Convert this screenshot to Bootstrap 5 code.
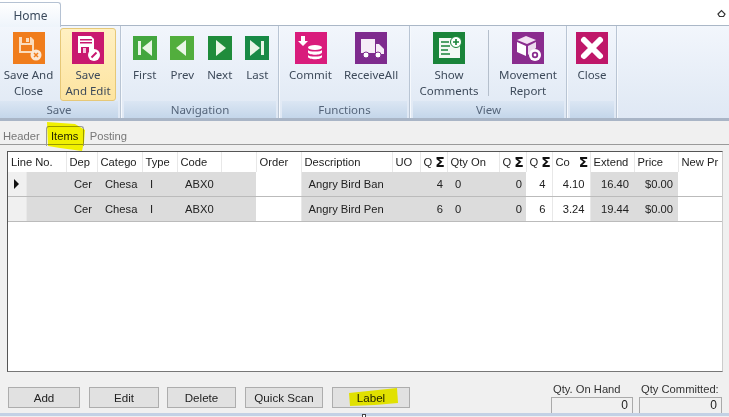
<!DOCTYPE html>
<html lang="en">
<head>
<meta charset="utf-8">
<title>Items</title>
<link href="https://cdn.jsdelivr.net/npm/bootstrap@5.3.0/dist/css/bootstrap.min.css" rel="stylesheet">
<style>
html,body{height:417px;overflow:hidden}
body{background:#f0f0f0;font-family:"Liberation Sans",Arial,sans-serif;font-size:11.2px;color:#333;position:relative}
.tabstrip{height:26px;background:#fff}
.hometab{width:61px;height:25px;margin-top:2px;border:1px solid #b5c2d3;border-bottom:0;border-left:0;border-radius:0 3px 0 0;background:linear-gradient(#fff,#eef4fb);font-family:"Noto Sans",sans-serif;font-size:12px;color:#3b4a5c;line-height:26px;text-align:center;position:relative;z-index:1;padding-left:1px}
.collapser{width:9px;height:9px;margin:9px 3px 0 0}
.ribbon{height:96px;margin-top:-1px;background:linear-gradient(#f2f6fc,#dfe8f4);border-top:1px solid #aab7c7;border-bottom:3px solid #a9b5c6}
.rgroup{border-right:1px solid #b9c5d4;box-shadow:1px 0 0 #f6f9fd;height:100%;padding:2px 2px 1px 3px}
.g-save{width:121px;padding-left:0}.g-nav{width:158px}.g-fn{width:131px}.g-view{width:157px}.g-close{width:50px}
.rbtns{height:73px}
.rlabel{height:17px;line-height:17px;text-align:center;font-family:"Noto Sans",sans-serif;font-size:11.5px;color:#55657a;background:linear-gradient(#dbe6f3,#c4d6ea)}
.rbtn{font-family:"Noto Sans",sans-serif;font-size:11.5px;line-height:16px;color:#3d4a5a;text-align:center;padding-top:3px;border:1px solid transparent;border-radius:3px}
.rbtn svg{display:block;margin:0 auto 3px}
.rbtn.active-btn{background:linear-gradient(#fff0c2,#fde4a0);border-color:#e6c878}
.navbtn{width:38px;padding-top:7px}
.navbtn svg{margin-bottom:7px}
.gapnav{padding:0 0 0 2px}
.w57{width:57px}.w56{width:56px}.w64{width:64px}.wfn{width:57px}
.gap3{margin-left:3px}
.rsep{width:1px;height:66px;background:#b5bfcc;margin:2px 7px 0 7px}
.pagetabs{height:24px;border-bottom:1px solid #9a9a9a;padding-left:3px;color:#777;position:relative}
.pagetabs span{line-height:30px}
.ptab-on{margin:5px 0 -1px 6px;width:38px;height:20px;border:1px solid #9a9a9a;border-bottom:0;border-radius:3px 3px 0 0;text-align:center;color:#222;line-height:19px!important}
.ptab-off{margin-left:6px}
.gridwrap{padding:6px 6px 0 7px;height:227px}
.gridbox{height:221px;background:#fff;border:1px solid #555;border-right-color:#ccc;border-bottom-color:#777;overflow:hidden}
.table.dg{table-layout:fixed;width:714px;margin:0;border-collapse:collapse;font-size:11.2px;color:#222}
.table.dg>:not(caption)>*>*{padding:0 3px;border:0;border-right:1px solid #e8e8e8;border-bottom:1px solid #bbb;white-space:nowrap;overflow:hidden;background:transparent;color:#222;box-shadow:none;vertical-align:middle;line-height:14px}
.table.dg>thead>tr>th{font-weight:400;height:20px;border-bottom:0;background:#fff;padding:0 0 0 3px}
.table.dg>tbody>tr>td{height:24.5px}
.table.dg>tbody>tr>td.gry{background:#dcdcdc;border-right:0}
.table.dg>tbody>tr>td.wht{background:#fff}
.table.dg>tbody>tr>td.rh{background:#f0f0f0;padding:0}
.table.dg>tbody>tr>td.e4{padding-right:4px}
.table.dg>tbody>tr>td.e5{padding-right:5px}
.table.dg>tbody>tr>td.e6{padding-right:6px}
.table.dg>tbody>tr>td.i5{padding-left:8px}
.table.dg>tbody>tr>td.i6{padding-left:7px}
.sig{font-family:"DejaVu Sans",sans-serif;font-weight:700;font-size:14px;color:#111;line-height:12px;vertical-align:-1px}
.sigfar{margin-left:9px}
.tarrow{width:0;height:0;display:block;margin-left:6px;border-left:5px solid #111;border-top:5px solid transparent;border-bottom:5px solid transparent}
.foot{height:41px;padding:15px 7px 0 8px}
.wbtn{height:21px;padding:0;font-size:11.6px;line-height:19px;color:#222;background:#e1e1e1;border:1px solid #adadad;border-radius:0}
.qtybox{width:82px;line-height:14px;margin-top:-5px;white-space:nowrap}
.qtybox+.qtybox{margin-left:6px;width:83px}
.qlab{padding-left:2px;height:15px;color:#333;font-size:11.2px}
.qval{height:16px;border:1px solid #aaa;border-bottom:0;background:#f0f0f0;text-align:right;padding-right:4px;color:#222;font-size:12px}
.statusbar{height:3px;background:#c3d1e5}
.hl{position:absolute;mix-blend-mode:multiply;pointer-events:none}
.sizer{position:absolute;left:362px;top:414px;width:4px;height:3px;background:#fff;border:1px solid #444;border-bottom:0}
</style>
</head>
<body>
<div class="tabstrip d-flex justify-content-between">
  <div class="hometab">Home</div>
  <svg class="collapser" viewBox="0 0 9 9"><path d="M1 5 4.500 1.500 8 5 6.500 7.500H2.500Z" fill="none" stroke="#333" stroke-width="1.200"/></svg>
</div>
<div class="ribbon d-flex">
  <div class="rgroup g-save">
    <div class="rbtns d-flex">
      <div class="rbtn w57"><svg width="32" height="32" viewBox="0 0 32 32"><rect width="32" height="32" fill="#f07d1c"/><path d="M6 5H18L21 8V21H6Z" fill="#fbdcbc"/><rect x="9" y="5" width="8" height="6" fill="#f07d1c"/><rect x="13" y="6" width="3" height="4" fill="#fbdcbc"/><rect x="8" y="13" width="11" height="6" fill="#f07d1c"/><circle cx="23" cy="23" r="5.500" fill="#fbe6d2"/><path d="M21 21l4 4m0-4-4 4" stroke="#f07d1c" stroke-width="1.500"/></svg>Save And<br>Close</div>
      <div class="rbtn w56 active-btn gap3"><svg width="32" height="32" viewBox="0 0 32 32"><rect width="32" height="32" fill="#c9186f"/><path d="M6 4H19L22 7V21H6Z" fill="#fff"/><rect x="8" y="7" width="12" height="1.500" fill="#c9186f"/><rect x="8" y="10" width="12" height="1.500" fill="#c9186f"/><rect x="9" y="15" width="8" height="6" fill="#c9186f"/><rect x="11" y="16" width="3" height="5" fill="#f4c4dc"/><circle cx="22" cy="23" r="6" fill="#fff"/><path d="M19.500 25.500l5-5" stroke="#c9186f" stroke-width="2"/></svg>Save<br>And Edit</div>
    </div>
    <div class="rlabel">Save</div>
  </div>
  <div class="rgroup g-nav">
    <div class="rbtns d-flex gapnav">
      <div class="rbtn navbtn"><svg width="24" height="24" viewBox="0 0 24 24"><rect width="24" height="24" fill="#43a63f"/><rect x="5" y="5" width="3" height="14" fill="#e8f5e6"/><path d="M19 4V20L9 12Z" fill="#e8f5e6"/></svg>First</div>
      <div class="rbtn navbtn"><svg width="24" height="24" viewBox="0 0 24 24"><rect width="24" height="24" fill="#52ae3d"/><path d="M16 4V20L6 12Z" fill="#eaf6e6"/></svg>Prev</div>
      <div class="rbtn navbtn"><svg width="24" height="24" viewBox="0 0 24 24"><rect width="24" height="24" fill="#1f8c3b"/><path d="M8 4V20L18 12Z" fill="#eaf6e6"/></svg>Next</div>
      <div class="rbtn navbtn"><svg width="24" height="24" viewBox="0 0 24 24"><rect width="24" height="24" fill="#188a46"/><rect x="16" y="5" width="3" height="14" fill="#e8f5e6"/><path d="M5 4V20L15 12Z" fill="#e8f5e6"/></svg>Last</div>
    </div>
    <div class="rlabel">Navigation</div>
  </div>
  <div class="rgroup g-fn">
    <div class="rbtns d-flex">
      <div class="rbtn wfn"><svg width="32" height="32" viewBox="0 0 32 32"><rect width="32" height="32" fill="#d91c7c"/><path d="M6 4h4v5h3l-5 5-5-5h3Z" fill="#fff"/><g fill="#fff"><ellipse cx="20" cy="15.500" rx="7" ry="2.500"/><path d="M13 18c1 2 13 2 14 0v2.500c-1 3-13 3-14 0Z"/><path d="M13 23c1 2 13 2 14 0v2c-1 3-13 3-14 0Z"/></g></svg>Commit</div>
      <div class="rbtn w64"><svg width="32" height="32" viewBox="0 0 32 32"><rect width="32" height="32" fill="#7e2b8e"/><rect x="6" y="7" width="14" height="14" fill="#f6ecf7"/><path d="M21 12h3l5 5v5H21Z" fill="#f6ecf7"/><circle cx="11" cy="23" r="3" fill="#fff" stroke="#7e2b8e"/><circle cx="23" cy="23" r="3" fill="#fff" stroke="#7e2b8e"/></svg>ReceiveAll</div>
    </div>
    <div class="rlabel">Functions</div>
  </div>
  <div class="rgroup g-view">
    <div class="rbtns d-flex ps-1">
      <div class="rbtn w64"><svg width="32" height="32" viewBox="0 0 32 32"><rect width="32" height="32" fill="#1a843a"/><path d="M6 6H19V11H27V26H6Z" fill="#f4f9f5"/><path d="M8 10h8M8 14h9M8 18h7M8 22h9" stroke="#1a843a" stroke-width="1.600"/><circle cx="23" cy="10" r="5.500" fill="#fff" stroke="#1a843a"/><path d="M23 7v6M20 10h6" stroke="#1a843a" stroke-width="1.600"/></svg>Show<br>Comments</div>
      <div class="rsep"></div>
      <div class="rbtn w64"><svg width="32" height="32" viewBox="0 0 32 32"><rect width="32" height="32" fill="#8a2c8e"/><path d="M5 8 14 4 24 8 15 12Z" fill="#f2e2f3"/><path d="M5 10 14 14V24L5 20Z" fill="#fff"/><path d="M16 14 24 10V16L16 23Z" fill="#ecd9ee"/><circle cx="23" cy="23" r="6" fill="#fff"/><circle cx="23" cy="23" r="3.200" fill="#8a2c8e"/><circle cx="23" cy="23" r="1.400" fill="#fff"/></svg>Movement<br>Report</div>
    </div>
    <div class="rlabel">View</div>
  </div>
  <div class="rgroup g-close">
    <div class="rbtns d-flex justify-content-center">
      <div class="rbtn"><svg width="32" height="32" viewBox="0 0 32 32"><rect width="32" height="32" fill="#bf1769"/><path d="M8 8 24 24M24 8 8 24" stroke="#fff" stroke-width="6" stroke-linecap="round"/></svg>Close</div>
    </div>
    <div class="rlabel">&nbsp;</div>
  </div>
</div>
<div class="pagetabs d-flex">
  <span>Header</span>
  <span class="ptab-on">Items</span>
  <span class="ptab-off">Posting</span>
</div>
<div class="gridwrap">
  <div class="gridbox">
    <table class="table dg">
      <colgroup>
        <col style="width:18px"><col style="width:40px"><col style="width:31px"><col style="width:45px"><col style="width:35px"><col style="width:44px"><col style="width:35px"><col style="width:45px"><col style="width:91px"><col style="width:28px"><col style="width:27px"><col style="width:52px"><col style="width:27px"><col style="width:26px"><col style="width:38px"><col style="width:44px"><col style="width:44px"><col style="width:44px">
      </colgroup>
      <thead>
        <tr>
          <th colspan="2">Line No.</th><th>Dep</th><th>Catego</th><th>Type</th><th>Code</th><th></th><th>Order</th><th>Description</th><th>UO</th>
          <th>Q <span class="sig">Σ</span></th><th>Qty On</th><th>Q <span class="sig">Σ</span></th><th>Q <span class="sig">Σ</span></th>
          <th>Co<span class="sig sigfar">Σ</span></th><th>Extend</th><th>Price</th><th>New Pr</th>
        </tr>
      </thead>
      <tbody>
        <tr>
          <td class="rh"><span class="tarrow"></span></td><td class="gry"></td><td class="gry i5">Cer</td><td class="gry i5">Chesa</td><td class="gry i5">I</td><td class="gry i5">ABX0</td><td class="gry"></td><td class="wht"></td><td class="gry i6">Angry Bird Ban</td><td class="gry"></td><td class="gry text-end e4">4</td><td class="gry i5">0</td><td class="gry text-end e4">0</td><td class="wht text-end e6">4</td><td class="wht text-end e5">4.10</td><td class="gry text-end e5">16.40</td><td class="gry text-end e5">$0.00</td><td class="wht"></td>
        </tr>
        <tr>
          <td class="rh"></td><td class="gry"></td><td class="gry i5">Cer</td><td class="gry i5">Chesa</td><td class="gry i5">I</td><td class="gry i5">ABX0</td><td class="gry"></td><td class="wht"></td><td class="gry i6">Angry Bird Pen</td><td class="gry"></td><td class="gry text-end e4">6</td><td class="gry i5">0</td><td class="gry text-end e4">0</td><td class="wht text-end e6">6</td><td class="wht text-end e5">3.24</td><td class="gry text-end e5">19.44</td><td class="gry text-end e5">$0.00</td><td class="wht"></td>
        </tr>
      </tbody>
    </table>
  </div>
</div>
<div class="foot d-flex">
  <div class="d-flex">
    <button class="btn wbtn" style="width:72px;margin-right:9px">Add</button>
    <button class="btn wbtn" style="width:70px;margin-right:8px">Edit</button>
    <button class="btn wbtn" style="width:69px;margin-right:9px">Delete</button>
    <button class="btn wbtn" style="width:78px;margin-right:9px">Quick Scan</button>
    <button class="btn wbtn" style="width:78px">Label</button>
  </div>
  <div class="d-flex ms-auto">
    <div class="qtybox"><div class="qlab">Qty. On Hand</div><div class="qval">0</div></div>
    <div class="qtybox"><div class="qlab">Qty Committed:</div><div class="qval">0</div></div>
  </div>
</div>
<div class="statusbar"></div>
<div class="sizer"></div>
<svg class="hl" style="left:45px;top:122px" width="42" height="30" viewBox="0 0 42 30"><path d="M2 0 30 2 40 8 39 20 37 29 15 26 3 24Z" fill="#ffff00"/></svg>
<svg class="hl" style="left:346px;top:386px" width="54" height="22" viewBox="0 0 54 22"><path d="M3 7 51 2 52 17 29 19 4 20Z" fill="#ffff00"/></svg>
</body>
</html>
